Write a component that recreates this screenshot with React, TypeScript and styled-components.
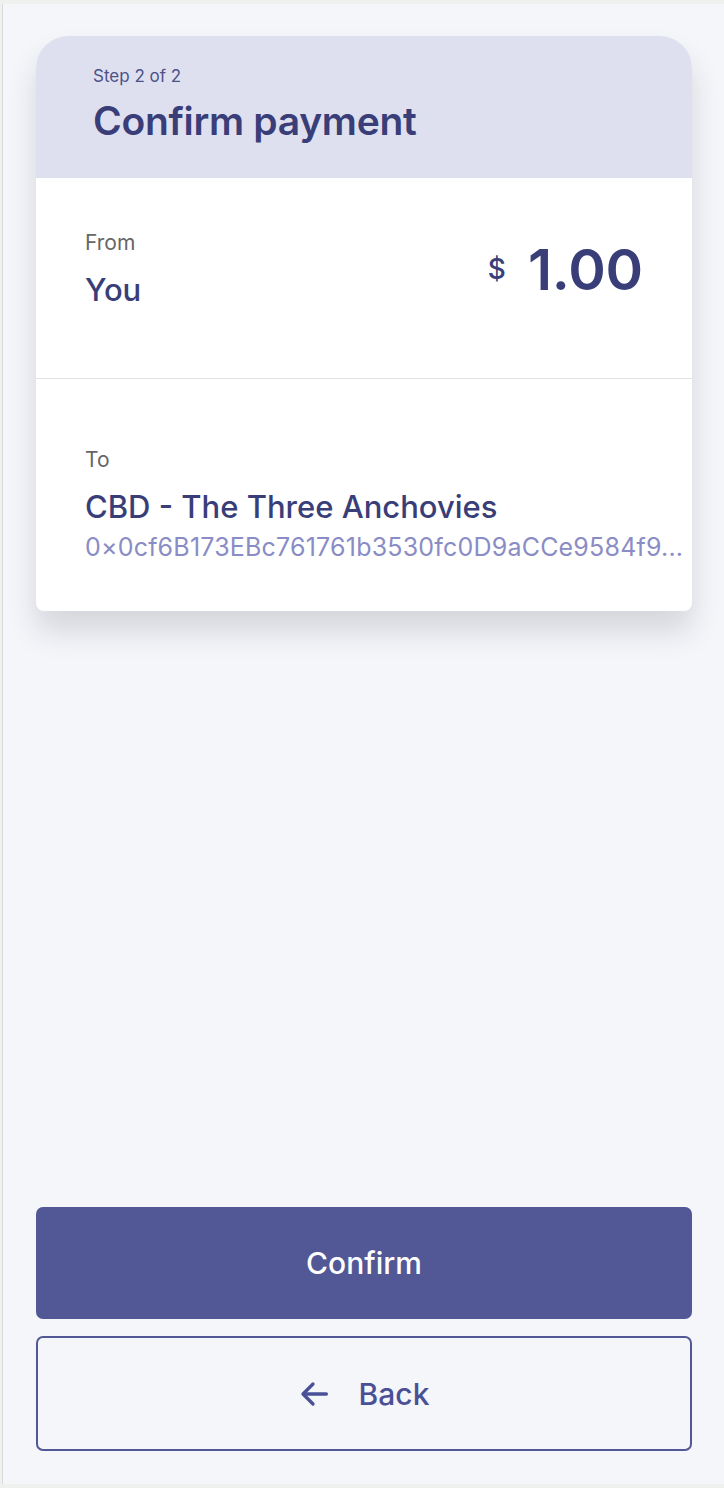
import React from "react";
import styled, { createGlobalStyle } from "styled-components";

const GlobalStyle = createGlobalStyle`
    html, body {
        margin: 0;
        padding: 0;
        background: #eff1ee;
        font-family: Inter, "Noto Sans", sans-serif;
    }
    * {
        box-sizing: border-box;
    }
`;

const Screen = styled.div`
    margin: 4px 0 4px 2px;
    min-height: 1480px;
    border-left: 1px solid #d9dad9;
    background: #f5f6fa;
    display: flex;
    flex-direction: column;
    padding: 32px 32px 33px 33px;
`;

const Card = styled.section`
    background: #ffffff;
    border-radius: 32px 32px 8px 8px;
    box-shadow: 0 20px 30px rgba(30, 32, 50, 0.15);
    overflow: hidden;
`;

const Header = styled.header`
    background: #dfe0ef;
    height: 142px;
    padding: 28px 57px 0;
`;

const StepLabel = styled.div`
    font-size: 17px;
    color: #4c5189;
    line-height: 24px;
`;

const Title = styled.h1`
    margin: 10px 0 0;
    font-size: 39px;
    font-weight: 600;
    line-height: 46px;
    color: #393e78;
    letter-spacing: -0.3px;
`;

const Section = styled.div<{ $divider?: boolean; $height: number; $padRight: number }>`
    height: ${(p) => p.$height}px;
    padding: ${(p) => (p.$divider ? 52 : 68)}px ${(p) => p.$padRight}px 0 49px;
    border-bottom: ${(p) => (p.$divider ? "1px solid #e2e2e4" : "none")};
    display: flex;
    justify-content: space-between;
    align-items: flex-start;
`;

const Party = styled.div`
    display: flex;
    flex-direction: column;
    min-width: 0;
    flex: 1;
`;

const Label = styled.div`
    font-size: 21px;
    color: #666666;
    line-height: 26px;
`;

const Name = styled.div`
    margin-top: 16px;
    font-size: 31px;
    font-weight: 450;
    color: #393e78;
    line-height: 36px;
`;

const Address = styled.div`
    margin-top: 7px;
    font-size: 25px;
    letter-spacing: 0.2px;
    color: #8a8cc5;
    line-height: 30px;
    white-space: nowrap;
`;

const Amount = styled.div`
    display: flex;
    align-items: center;
    gap: 22px;
    color: #393e78;
    margin-top: 10px;
`;

const Currency = styled.span`
    font-size: 28px;
    font-weight: 500;
    line-height: 40px;
    margin-top: -2px;
`;

const Value = styled.span`
    font-size: 57px;
    font-weight: 600;
    line-height: 60px;
    letter-spacing: -0.2px;
`;

const Spacer = styled.div`
    flex: 1;
`;

const Button = styled.button<{ $primary?: boolean }>`
    width: 100%;
    height: ${(p) => (p.$primary ? 112 : 115)}px;
    border-radius: 7px;
    border: 2px solid #515895;
    background: ${(p) => (p.$primary ? "#515895" : "transparent")};
    color: ${(p) => (p.$primary ? "#ffffff" : "#4a5096")};
    font-family: inherit;
    font-size: 30px;
    font-weight: 500;
    display: flex;
    align-items: center;
    justify-content: center;
    gap: 28px;
    cursor: pointer;
    & + & {
        margin-top: 17px;
    }
`;

const ArrowLeft = () => (
    <svg width="32" height="32" viewBox="0 0 24 24" fill="none" stroke="currentColor" strokeWidth="2.5" strokeLinecap="round" strokeLinejoin="round">
        <path d="M20.5 12H3.5" />
        <path d="M10.5 4.5L3 12l7.5 7.5" />
    </svg>
);

export default function App() {
    return (
        <>
            <GlobalStyle />
            <Screen>
                <Card>
                    <Header>
                        <StepLabel>Step 2 of 2</StepLabel>
                        <Title>Confirm payment</Title>
                    </Header>
                    <Section $divider $height={201} $padRight={49}>
                        <Party>
                            <Label>From</Label>
                            <Name>You</Name>
                        </Party>
                        <Amount>
                            <Currency>$</Currency>
                            <Value>1.00</Value>
                        </Amount>
                    </Section>
                    <Section $height={232} $padRight={8}>
                        <Party>
                            <Label>To</Label>
                            <Name>CBD - The Three Anchovies</Name>
                            <Address>0×0cf6B173EBc761761b3530fc0D9aCCe9584f9...</Address>
                        </Party>
                    </Section>
                </Card>
                <Spacer />
                <Button $primary>Confirm</Button>
                <Button>
                    <ArrowLeft />
                    Back
                </Button>
            </Screen>
        </>
    );
}
